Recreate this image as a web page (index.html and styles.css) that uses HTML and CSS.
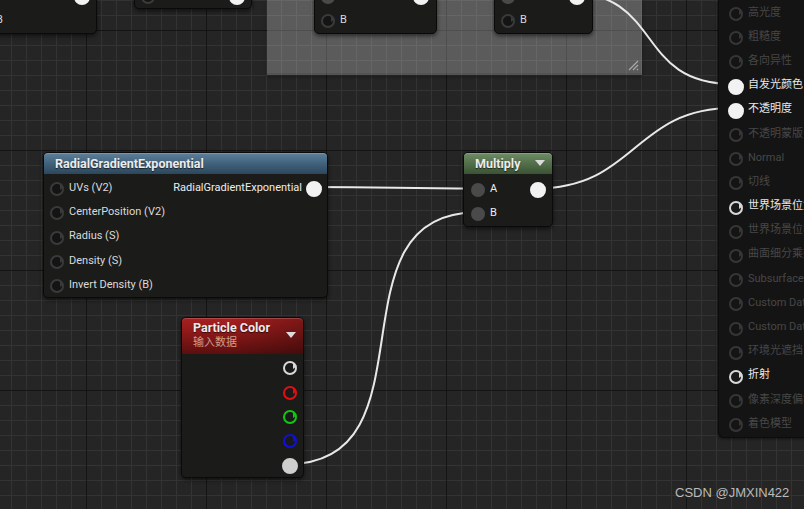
FILE: index.html
```html
<!DOCTYPE html>
<html lang="zh">
<head>
<meta charset="utf-8">
<title>Material Graph</title>
<link rel="stylesheet" href="styles.css">
</head>
<body>
<div class="graph">
  <div class="comment">
    <svg class="grip" width="12" height="12" viewBox="0 0 12 12"><path d="M11 2 L2 11 M11 6 L6 11 M11 10 L10 11" stroke="#a8a8a8" stroke-width="1.2" fill="none"/></svg>
  </div>

  <svg class="wires" width="804" height="509" viewBox="0 0 804 509">
    <g fill="none" stroke="#e8e8e8" stroke-width="2" stroke-linecap="round">
      <path d="M312 187 C 390 187, 400 188.5, 476 188.5"/>
      <path d="M288 464 C 438 464, 326 212.5, 476 212.5"/>
      <path d="M536 188.5 C 636 188.5, 633 108, 733 108"/>
      <path d="M565 -8 C 665 -8, 633 84, 733 84"/>
    </g>
  </svg>

  <div class="node node-a">
    <div class="node-head head-dark"></div>
    <div class="node-body">
      <div class="row"><span></span><span class="pin pin-white"></span></div>
      <div class="row"><span class="port"><span class="pin"></span><span class="label">B</span></span></div>
    </div>
  </div>

  <div class="node node-b">
    <div class="node-head head-dark"></div>
    <div class="node-body">
      <div class="row"><span class="pin"></span><span class="pin pin-white"></span></div>
    </div>
  </div>

  <div class="node node-c1">
    <div class="node-head head-dark"></div>
    <div class="node-body">
      <div class="row"><span class="pin pin-gray"></span><span class="pin pin-white"></span></div>
      <div class="row"><span class="port"><span class="pin"></span><span class="label">B</span></span></div>
    </div>
  </div>

  <div class="node node-c2">
    <div class="node-head head-dark"></div>
    <div class="node-body">
      <div class="row"><span class="pin pin-gray"></span><span class="pin pin-white"></span></div>
      <div class="row"><span class="port"><span class="pin"></span><span class="label">B</span></span></div>
    </div>
  </div>

  <div class="node node-radial">
    <div class="node-head head-blue"><span class="title">RadialGradientExponential</span></div>
    <div class="node-body">
      <div class="row">
        <span class="port"><span class="pin"></span><span class="label">UVs (V2)</span></span>
        <span class="port"><span class="label label-out">RadialGradientExponential</span><span class="pin pin-white"></span></span>
      </div>
      <div class="row"><span class="port"><span class="pin"></span><span class="label">CenterPosition (V2)</span></span></div>
      <div class="row"><span class="port"><span class="pin"></span><span class="label">Radius (S)</span></span></div>
      <div class="row"><span class="port"><span class="pin"></span><span class="label">Density (S)</span></span></div>
      <div class="row"><span class="port"><span class="pin"></span><span class="label">Invert Density (B)</span></span></div>
    </div>
  </div>

  <div class="node node-multiply">
    <div class="node-head head-green"><span class="title">Multiply</span><span class="drop"></span></div>
    <div class="node-body body-multiply">
      <div class="row">
        <span class="port"><span class="pin pin-gray"></span><span class="label label-out">A</span></span>
        <span class="pin pin-white"></span>
      </div>
      <div class="row"><span class="port"><span class="pin pin-gray"></span><span class="label label-out">B</span></span></div>
    </div>
  </div>

  <div class="node node-particle">
    <div class="node-head head-red">
      <div class="titles"><span class="title">Particle Color</span><span class="subtitle">输入数据</span></div>
      <span class="drop"></span>
    </div>
    <div class="node-body body-particle">
      <div class="row row-end"><span class="pin pin-ring"></span></div>
      <div class="row row-end"><span class="pin pin-red"></span></div>
      <div class="row row-end"><span class="pin pin-green"></span></div>
      <div class="row row-end"><span class="pin pin-blue"></span></div>
      <div class="row row-end"><span class="pin pin-light"></span></div>
    </div>
  </div>

  <div class="panel">
    <div class="prow off"><span class="pin pin-dim"></span><span>高光度</span></div>
    <div class="prow off"><span class="pin pin-dim"></span><span>粗糙度</span></div>
    <div class="prow off"><span class="pin pin-dim"></span><span>各向异性</span></div>
    <div class="prow"><span class="pin pin-white"></span><span>自发光颜色</span></div>
    <div class="prow"><span class="pin pin-white"></span><span>不透明度</span></div>
    <div class="prow off"><span class="pin pin-dim"></span><span>不透明蒙版</span></div>
    <div class="prow off"><span class="pin pin-dim"></span><span>Normal</span></div>
    <div class="prow off"><span class="pin pin-dim"></span><span>切线</span></div>
    <div class="prow"><span class="pin pin-ring"></span><span>世界场景位置偏移</span></div>
    <div class="prow off"><span class="pin pin-dim"></span><span>世界场景位移</span></div>
    <div class="prow off"><span class="pin pin-dim"></span><span>曲面细分乘数</span></div>
    <div class="prow off"><span class="pin pin-dim"></span><span>Subsurface Color</span></div>
    <div class="prow off"><span class="pin pin-dim"></span><span>Custom Data 0</span></div>
    <div class="prow off"><span class="pin pin-dim"></span><span>Custom Data 1</span></div>
    <div class="prow off"><span class="pin pin-dim"></span><span>环境光遮挡</span></div>
    <div class="prow"><span class="pin pin-ring"></span><span>折射</span></div>
    <div class="prow off"><span class="pin pin-dim"></span><span>像素深度偏移</span></div>
    <div class="prow off"><span class="pin pin-dim"></span><span>着色模型</span></div>
  </div>

  <div class="watermark">CSDN @JMXIN422</div>
</div>
</body>
</html>
```
FILE: styles.css
```css
* { box-sizing: border-box; }
html, body { margin: 0; padding: 0; }
body {
  width: 804px;
  height: 509px;
  overflow: hidden;
  background: #262626;
  font-family: Roboto, "Noto Sans CJK SC", sans-serif;
}

.graph {
  position: relative;
  width: 804px;
  height: 509px;
  overflow: hidden;
  background:
    linear-gradient(90deg, #141414 1px, transparent 1px) 86px 0 / 120px 120px,
    linear-gradient(180deg, #141414 1px, transparent 1px) 0 30px / 120px 120px,
    linear-gradient(90deg, #333333 1px, transparent 1px) 11px 0 / 15px 15px,
    linear-gradient(180deg, #333333 1px, transparent 1px) 0 0 / 15px 15px,
    #252525;
}

/* comment box */
.comment {
  position: absolute;
  left: 267px;
  top: -10px;
  width: 375px;
  height: 85px;
  background: rgba(255, 255, 255, 0.25);
  border-bottom: 2px solid rgba(0, 0, 0, 0.08);
  box-shadow: 0 2px 3px rgba(0, 0, 0, 0.35);
}
.grip {
  position: absolute;
  right: 3px;
  bottom: 2px;
}

.wires {
  position: absolute;
  left: 0;
  top: 0;
}

/* nodes */
.node {
  position: absolute;
  display: flex;
  flex-direction: column;
  background: #1b1c1a;
  border: 1px solid #0a0a0a;
  border-radius: 5px;
  box-shadow: 0 2px 4px rgba(0, 0, 0, 0.55);
}
.node-head {
  height: 21px;
  display: flex;
  align-items: center;
  justify-content: space-between;
  padding: 0 7px 0 11px;
  border-radius: 4px 4px 0 0;
  box-shadow: inset 0 1px 0 rgba(255, 255, 255, 0.18);
}
.head-dark { background: #1b1c1a; box-shadow: none; }
.head-blue { background: linear-gradient(180deg, #5f809b 0%, #44657f 45%, #2c475c 100%); }
.head-green { background: linear-gradient(180deg, #6f8d67 0%, #55724d 45%, #3a5334 100%); }
.head-red {
  height: 36px;
  align-items: flex-start;
  padding-top: 2px;
  background:
    linear-gradient(90deg, rgba(0,0,0,0) 40%, rgba(0,0,0,0.25) 100%),
    linear-gradient(180deg, #a82020 0%, #8a1818 45%, #5a0f0f 100%);
}
.title {
  font-size: 12.5px;
  font-weight: 700;
  line-height: 15px;
  color: #ececec;
  text-shadow: 0 1px 1px rgba(0, 0, 0, 0.6);
  white-space: nowrap;
}
.titles { display: flex; flex-direction: column; }
.subtitle {
  font-size: 11px;
  line-height: 15px;
  color: #cf9e8c;
}
.drop {
  width: 0;
  height: 0;
  border-left: 5px solid transparent;
  border-right: 5px solid transparent;
  border-top: 6px solid #dcdcdc;
}
.head-green .drop { margin-top: -2px; }
.head-red .drop { margin-top: 12px; }

.node-body {
  padding: 1px 7px 1px 6px;
  display: flex;
  flex-direction: column;
}
.body-multiply { padding-top: 2px; padding-left: 7px; }
.body-particle { padding-top: 0; padding-right: 6px; }

.row {
  height: 24.3px;
  display: flex;
  align-items: center;
  justify-content: space-between;
}
.body-particle .row { height: 24.4px; }
.row-end { justify-content: flex-end; }
.port {
  display: flex;
  align-items: center;
  gap: 5px;
}
.label {
  font-size: 11px;
  line-height: 13px;
  color: #dadada;
  white-space: nowrap;
}
.label-out { color: #eeeeee; }

.node-a { left: -30px; top: -40px; width: 127px; }
.node-b { left: 134px; top: -40px; width: 118px; }
.node-c1 { left: 314px; top: -40px; width: 123px; }
.node-c2 { left: 494px; top: -40px; width: 99px; }
.node-c1 .node-body, .node-c2 .node-body { padding-right: 8px; }
.node-radial { left: 43px; top: 152px; width: 285px; }
.node-radial .node-body { padding-right: 6px; }
.node-multiply { left: 463px; top: 152px; width: 90px; }
.node-particle { left: 181px; top: 317px; width: 123px; }

/* pins: ring + direction arrow */
.pin {
  --c: #3a3a3a;
  --fill: #141414;
  position: relative;
  flex: none;
  width: 14px;
  height: 10px;
}
.pin::before {
  content: "";
  position: absolute;
  left: 0;
  top: 0;
  width: 10px;
  height: 10px;
  border-radius: 50%;
  border: 2px solid var(--c);
  background: var(--fill);
}
.pin::after {
  content: "";
  position: absolute;
  left: 10px;
  top: 2px;
  width: 0;
  height: 0;
  box-sizing: content-box;
  border-left: 4px solid var(--c);
  border-top: 3px solid transparent;
  border-bottom: 3px solid transparent;
}
.pin-white { --c: #f2f2f2; --fill: #f2f2f2; }
.pin-white::before { left: -1px; top: -1px; width: 12px; height: 12px; }
.pin-white::after { left: 10.5px; }
.pin-gray { --c: #4a4a4a; --fill: #4a4a4a; }
.pin-ring { --c: #d8d8d8; --fill: #1a1a1a; }
.pin-red { --c: #e01010; --fill: #1a1a1a; }
.pin-green { --c: #10c810; --fill: #1a1a1a; }
.pin-blue { --c: #1010d8; --fill: #1a1a1a; }
.pin-light { --c: #cfcfcf; --fill: #cfcfcf; }
.pin-light::before { left: -1px; top: -1px; width: 12px; height: 12px; }
.pin-dim { --c: #363636; --fill: transparent; }

/* material result panel */
.panel {
  position: absolute;
  left: 718px;
  top: 0;
  width: 220px;
  padding: 0 0 2px 10px;
  background: #141414;
  border-left: 1px solid #0c0c0c;
  border-bottom: 1px solid #0c0c0c;
  border-radius: 0 0 0 6px;
  box-shadow: -1px 1px 3px rgba(0, 0, 0, 0.5);
}
.prow {
  height: 24.2px;
  display: flex;
  align-items: center;
  gap: 5px;
  font-size: 11px;
  line-height: 13px;
  color: #e8e8e8;
  white-space: nowrap;
}
.prow.off { color: #474747; }

.watermark {
  position: absolute;
  left: 675px;
  top: 485px;
  font-family: "Liberation Sans", Arial, sans-serif;
  font-size: 13px;
  line-height: 15px;
  color: rgba(215, 215, 215, 0.85);
  white-space: nowrap;
}
```
